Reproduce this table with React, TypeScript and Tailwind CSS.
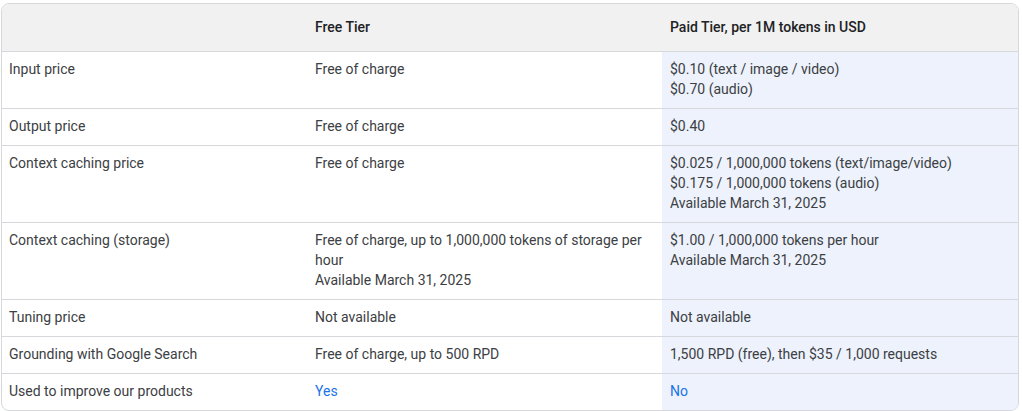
type Row = {
  label: string;
  free: string[];
  paid: string[];
  link?: boolean;
};

const rows: Row[] = [
  {
    label: "Input price",
    free: ["Free of charge"],
    paid: ["$0.10 (text / image / video)", "$0.70 (audio)"],
  },
  { label: "Output price", free: ["Free of charge"], paid: ["$0.40"] },
  {
    label: "Context caching price",
    free: ["Free of charge"],
    paid: [
      "$0.025 / 1,000,000 tokens (text/image/video)",
      "$0.175 / 1,000,000 tokens (audio)",
      "Available March 31, 2025",
    ],
  },
  {
    label: "Context caching (storage)",
    free: [
      "Free of charge, up to 1,000,000 tokens of storage per hour",
      "Available March 31, 2025",
    ],
    paid: ["$1.00 / 1,000,000 tokens per hour", "Available March 31, 2025"],
  },
  { label: "Tuning price", free: ["Not available"], paid: ["Not available"] },
  {
    label: "Grounding with Google Search",
    free: ["Free of charge, up to 500 RPD"],
    paid: ["1,500 RPD (free), then $35 / 1,000 requests"],
  },
  {
    label: "Used to improve our products",
    free: ["Yes"],
    paid: ["No"],
    link: true,
  },
];

const grid = "grid grid-cols-[305px_355px_356px]";

export default function App() {
  return (
    <div className="bg-white pl-px pt-[3px] pb-[2px] font-['Roboto',sans-serif] text-[14px] leading-5 text-[#3c4043]">
      <div className="w-[1018px] overflow-hidden rounded-lg border border-[#d6d8db]">
        <div className={`${grid} bg-[#f1f1f1] font-medium text-[#202124]`}>
          <div className="pl-[7px] pr-2 pt-[14px] pb-[13px]" />
          <div className="px-2 pt-[13px] pb-[14px]">Free Tier</div>
          <div className="px-2 pt-[13px] pb-[14px]">
            Paid Tier, per 1M tokens in USD
          </div>
        </div>

        {rows.map((row) => (
          <div key={row.label} className={`${grid} border-t border-[#d6d8db]`}>
            <div className="pl-[7px] pr-2 pt-[7px] pb-[9px]">{row.label}</div>
            <div
              className={`px-2 pt-[7px] pb-[9px] ${row.link ? "text-[#1a73e8]" : ""}`}
            >
              {row.free.map((line) => (
                <div key={line}>{line}</div>
              ))}
            </div>
            <div
              className={`bg-[#edf2fc] px-2 pt-[7px] pb-[9px] ${row.link ? "text-[#1a73e8]" : ""}`}
            >
              {row.paid.map((line) => (
                <div key={line}>{line}</div>
              ))}
            </div>
          </div>
        ))}
      </div>
    </div>
  );
}
